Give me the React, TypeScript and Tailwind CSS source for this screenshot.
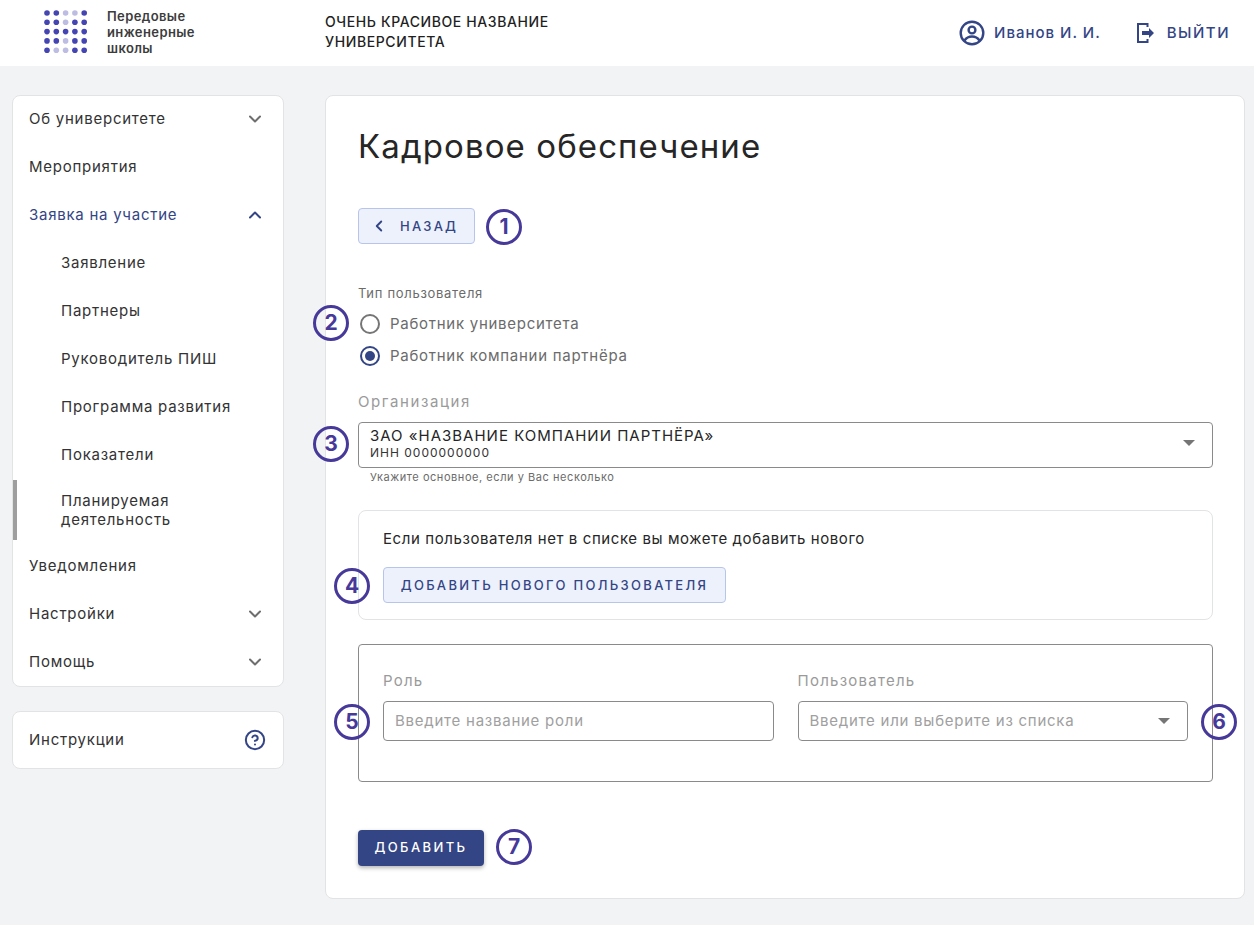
import { ChevronDown, ChevronLeft, ChevronUp, CircleHelp } from "lucide-react";

const font = "font-['Inter','Noto_Sans',sans-serif]";

const dots = ["ddlld", "ddldd", "ddddd", "ddldd", "dlldd"];

const Logo = () => (
  <svg width="48" height="46" viewBox="0 0 48 46">
    {dots.map((row, y) =>
      row.split("").map((c, x) => (
        <circle key={`${x}-${y}`} cx={3 + x * 9.3} cy={3 + y * 9.3} r="2.8" fill={c === "d" ? "#4444b2" : "#bdbce2"} />
      ))
    )}
  </svg>
);

const UserIcon = () => (
  <svg width="26" height="26" viewBox="0 0 26 26" fill="none" stroke="#334585" strokeWidth="2.4">
    <circle cx="13" cy="13" r="11.300" />
    <circle cx="13" cy="10" r="3.400" />
    <path d="M5.500 20.500c2-3 4.600-4 7.500-4s5.500 1 7.500 4" />
  </svg>
);

const ExitIcon = () => (
  <svg width="20" height="22" viewBox="0 0 20 22" fill="none">
    <path d="M11.500 5V2H2v18h9.500v-3" stroke="#334585" strokeWidth="2" />
    <path d="M6 9h7V6l5 5-5 5v-3H6z" fill="#334585" />
  </svg>
);

const Marker = ({ n, className = "" }: { n: number; className?: string }) => (
  <div className={`w-[36px] h-[36px] rounded-full border-[3px] border-[#46399a] bg-transparent flex items-center justify-center text-[21px] font-bold text-[#46399a] ${className}`}>
    {n}
  </div>
);

const Caret = ({ className = "" }: { className?: string }) => (
  <div className={`w-0 h-0 border-x-[6px] border-x-transparent border-t-[6px] border-t-[#757575] ${className}`} />
);

const NavRow = ({ label, open, active }: { label: string; open?: "up" | "down"; active?: boolean }) => (
  <div className={`h-[48px] pl-[16px] pr-[18px] flex items-center justify-between text-[15px] tracking-[0.75px] ${active ? "text-[#334585]" : "text-[#333333]"}`}>
    <span>{label}</span>
    {open === "down" && <ChevronDown size={20} strokeWidth={2.4} className="text-[#6e6e6e]" />}
    {open === "up" && <ChevronUp size={20} strokeWidth={2.4} className="text-[#334585]" />}
  </div>
);

const SubRow = ({ label }: { label: string }) => (
  <div className="h-[48px] pl-[48px] flex items-center text-[15px] tracking-[0.75px] text-[#333333]">{label}</div>
);

const Sidebar = () => (
  <aside className="w-[272px] shrink-0 flex flex-col gap-[24px]">
    <div className="h-[592px] bg-white rounded-[8px] border border-[#e2e3e5] overflow-hidden">
      <div className="-mt-[1px]">
        <NavRow label="Об университете" open="down" />
        <NavRow label="Мероприятия" />
        <NavRow label="Заявка на участие" open="up" active />
        <SubRow label="Заявление" />
        <SubRow label="Партнеры" />
        <SubRow label="Руководитель ПИШ" />
        <SubRow label="Программа развития" />
        <SubRow label="Показатели" />
        <div className="h-[63px] pt-[1px] flex items-start">
          <div className="w-[4px] h-[60px] bg-[#9e9e9e]" />
          <div className="pl-[44px] pt-[11px] text-[15px] leading-[19px] tracking-[0.75px] text-[#333333]">
            Планируемая
            <br />
            деятельность
          </div>
        </div>
        <NavRow label="Уведомления" />
        <NavRow label="Настройки" open="down" />
        <NavRow label="Помощь" open="down" />
      </div>
    </div>
    <div className="h-[58px] bg-white rounded-[8px] border border-[#e2e3e5] pl-[16px] pr-[17px] flex items-center justify-between text-[15px] tracking-[0.75px] text-[#333333]">
      <span>Инструкции</span>
      <CircleHelp size={22} strokeWidth={2.2} className="text-[#334585]" />
    </div>
  </aside>
);

const App = () => (
  <div className={`min-h-[925px] bg-[#f2f3f5] ${font}`}>
    <header className="h-[66px] bg-white flex items-center">
      <div className="w-[325px] shrink-0 pl-[44px] flex items-center gap-[15px]">
        <Logo />
        <div className="-mt-[2px] text-[13px] leading-[16px] font-semibold text-[#3c3c3c] tracking-[0.4px]">
          Передовые
          <br />
          инженерные
          <br />
          школы
        </div>
      </div>
      <div className="-mt-[2px] text-[14px] leading-[20px] font-medium text-[#1f1f1f] tracking-[0.6px]">
        ОЧЕНЬ КРАСИВОЕ НАЗВАНИЕ
        <br />
        УНИВЕРСИТЕТА
      </div>
      <div className="ml-auto pr-[24px] flex items-center text-[15px] font-medium text-[#334585] tracking-[1px]">
        <UserIcon />
        <span className="ml-[9px]">Иванов И. И.</span>
        <span className="ml-[35px]">
          <ExitIcon />
        </span>
        <span className="ml-[11px] tracking-[1.5px]">ВЫЙТИ</span>
      </div>
    </header>

    <div className="flex gap-[41px] pt-[29px] pl-[12px] pr-[9px]">
      <Sidebar />
      <main className="flex-1 h-[804px] bg-white rounded-[8px] border border-[#e2e3e5] pl-[32px] pr-[31px] pt-[28px]">
        <h1 className="text-[33px] leading-[44px] text-[#262626] tracking-[1.1px]">Кадровое обеспечение</h1>

        <div className="mt-[40px] flex items-center gap-[11px]">
          <button className="w-[117px] h-[36px] rounded-[4px] border border-[#b7c5ea] bg-[#edf1fc] flex items-center pl-[11px] text-[13px] font-medium tracking-[2.2px] text-[#334585]">
            <ChevronLeft size={18} strokeWidth={2.5} />
            <span className="ml-[12px] translate-y-[1px]">НАЗАД</span>
          </button>
          <Marker n={1} className="translate-y-[1px]" />
        </div>

        <div className="mt-[40px] text-[13px] leading-[18px] text-[#6b6b6b] tracking-[0.7px]">Тип пользователя</div>
        <div className="relative mt-[6px]">
          <Marker n={2} className="absolute left-[-45px] top-[-3px]" />
          <div className="h-[32px] flex items-center text-[#6b6b6b] text-[15px] tracking-[0.73px]">
            <div className="ml-[2px] w-[20px] h-[20px] rounded-full border-2 border-[#757575]" />
            <span className="ml-[10px]">Работник университета</span>
          </div>
          <div className="h-[32px] flex items-center text-[#6b6b6b] text-[15px] tracking-[0.73px]">
            <div className="ml-[2px] w-[20px] h-[20px] rounded-full border-2 border-[#334585] flex items-center justify-center">
              <div className="w-[10px] h-[10px] rounded-full bg-[#334585]" />
            </div>
            <span className="ml-[10px]">Работник компании партнёра</span>
          </div>
        </div>

        <div className="mt-[20px] text-[15px] leading-[20px] text-[#9a9a9a] tracking-[1.6px]">Организация</div>
        <div className="relative mt-[10px]">
          <Marker n={3} className="absolute left-[-45px] top-[4px]" />
          <div className="h-[46px] rounded-[4px] border border-[#8a8a8a] pl-[11px] pr-[17px] flex items-center justify-between">
            <div className="-mt-[2px]">
              <div className="text-[15px] leading-[18px] text-[#262626] tracking-[1px]">ЗАО «НАЗВАНИЕ КОМПАНИИ ПАРТНЁРА»</div>
              <div className="text-[12px] leading-[16px] text-[#333333] tracking-[1px]">ИНН 0000000000</div>
            </div>
            <Caret className="-mt-[4px]" />
          </div>
        </div>
        <div className="mt-[1px] pl-[12px] text-[11px] leading-[16px] text-[#6b6b6b] tracking-[0.55px]">Укажите основное, если у Вас несколько</div>

        <div className="relative mt-[25px] h-[110px] rounded-[8px] border border-[#e2e3e5] pl-[24px] pt-[18px]">
          <Marker n={4} className="absolute left-[-25px] top-[57px]" />
          <div className="text-[15px] leading-[20px] text-[#262626] tracking-[0.59px]">Если пользователя нет в списке вы можете добавить нового</div>
          <button className="mt-[18px] w-[343px] h-[36px] pt-[1px] rounded-[4px] border border-[#b7c5ea] bg-[#edf1fc] text-[13px] font-medium tracking-[2.3px] text-[#334585]">
            ДОБАВИТЬ НОВОГО ПОЛЬЗОВАТЕЛЯ
          </button>
        </div>

        <div className="relative mt-[24px] h-[138px] rounded-[4px] border border-[#8a8a8a] pl-[24px] pr-[24px] pt-[26px] grid grid-cols-2 gap-x-[24px] content-start">
          <Marker n={5} className="absolute left-[-25px] top-[59px]" />
          <Marker n={6} className="absolute right-[-25px] top-[59px]" />
          <div>
            <div className="text-[15px] leading-[20px] text-[#9a9a9a] tracking-[1.25px]">Роль</div>
            <div className="mt-[10px] h-[40px] rounded-[4px] border border-[#8a8a8a] pl-[11px] flex items-center text-[15px] text-[#a0a0a0] tracking-[0.75px]">Введите название роли</div>
          </div>
          <div>
            <div className="text-[15px] leading-[20px] text-[#9a9a9a] tracking-[1.25px]">Пользователь</div>
            <div className="mt-[10px] h-[40px] rounded-[4px] border border-[#8a8a8a] pl-[11px] pr-[17px] flex items-center justify-between text-[15px] text-[#a0a0a0] tracking-[0.75px]">
              <span>Введите или выберите из списка</span>
              <Caret />
            </div>
          </div>
        </div>

        <div className="mt-[48px] flex items-center gap-[12px]">
          <button className="w-[126px] h-[36px] rounded-[4px] bg-[#334585] shadow-[0_2px_4px_rgba(0,0,0,0.3)] text-white text-[13px] font-medium tracking-[2.4px]">ДОБАВИТЬ</button>
          <Marker n={7} className="-translate-y-[1px]" />
        </div>
      </main>
    </div>
  </div>
);

export default App;
